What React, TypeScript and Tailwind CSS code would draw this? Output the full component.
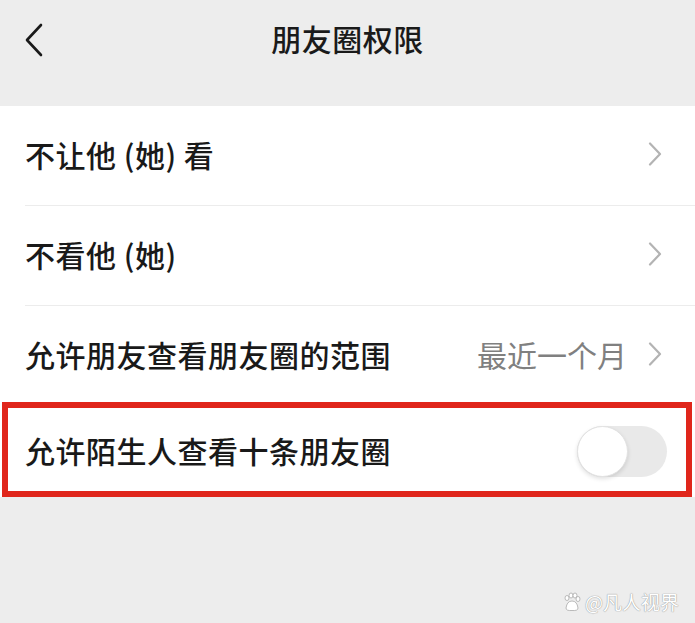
import React from "react";

const font = { fontFamily: '"Noto Sans CJK SC", "Noto Sans", sans-serif' };

function Chevron() {
  return (
    <svg width="16" height="24" viewBox="0 0 16 24" className="shrink-0">
      <path d="M3 1.5 L13 12 L3 22.5" fill="none" stroke="#b3b3b3" strokeWidth="2.2" strokeLinecap="round" strokeLinejoin="round" />
    </svg>
  );
}

function Row({ label, value, divider, chevron = true }: { label: string; value?: string; divider?: boolean; chevron?: boolean }) {
  return (
    <div className="relative flex h-[100px] items-center pb-[4px] pl-[25px] pr-[32px]">
      <span className="flex-1 text-[30px] font-medium tracking-[0.5px] text-[#191919]">{label}</span>
      {value && <span className="mr-[20px] text-[30px] text-[#808080]">{value}</span>}
      {chevron && <Chevron />}
      {divider && <div className="absolute bottom-0 left-[25px] right-0 h-px bg-[#ececec]" />}
    </div>
  );
}

export default function App() {
  return (
    <div className="relative h-[623px] w-[695px] overflow-hidden bg-[#ededed]" style={font}>
      <div className="h-[106px]">
        <div className="relative flex h-[82px] items-center justify-center pb-[6px]">
          <svg width="20" height="34" viewBox="0 0 20 34" className="absolute left-[24px] top-[23px]">
            <path d="M17 2 L3 17 L17 32" fill="none" stroke="#1a1a1a" strokeWidth="2.6" strokeLinecap="round" strokeLinejoin="round" />
          </svg>
          <span className="text-[30px] font-medium tracking-[0.5px] text-[#1a1a1a]">朋友圈权限</span>
        </div>
      </div>
      <div className="bg-white">
        <Row label="不让他 (她) 看" divider />
        <Row label="不看他 (她)" divider />
        <Row label="允许朋友查看朋友圈的范围" value="最近一个月" />
        <div className="flex h-[91px] items-center pl-[25px] pr-[28px]">
          <span className="flex-1 pb-[2px] text-[30px] font-medium tracking-[0.5px] text-[#191919]">允许陌生人查看十条朋友圈</span>
          <div className="relative h-[51px] w-[90px] rounded-full bg-[#e9e9e9]">
            <div className="absolute left-0 top-0 h-[51px] w-[51px] rounded-full border border-[#e2e2e2] bg-white shadow-[0_2px_4px_rgba(0,0,0,0.12)]" />
          </div>
        </div>
      </div>
      <div className="absolute left-[2px] top-[402px] h-[95px] w-[690px] border-[6px] border-[#e0261b]" />
      <div className="absolute right-[16px] top-[588px] flex items-center gap-[3px] text-[19px] text-white [text-shadow:0_0_1px_#999,0_0_1px_#999]">
        <svg width="20" height="20" viewBox="0 0 20 20">
          <g fill="#fff" stroke="#aaa" strokeWidth="0.8">
            <ellipse cx="5" cy="6" rx="2" ry="2.5" />
            <ellipse cx="9" cy="3.5" rx="2" ry="2.5" />
            <ellipse cx="13" cy="3.5" rx="2" ry="2.5" />
            <ellipse cx="16" cy="7" rx="2" ry="2.5" />
            <path d="M4 16 Q5 9 10 9 Q15 9 16 16 Q16 19 10 18.5 Q4 19 4 16 Z" />
          </g>
        </svg>
        <span>@凡人视界</span>
      </div>
    </div>
  );
}
